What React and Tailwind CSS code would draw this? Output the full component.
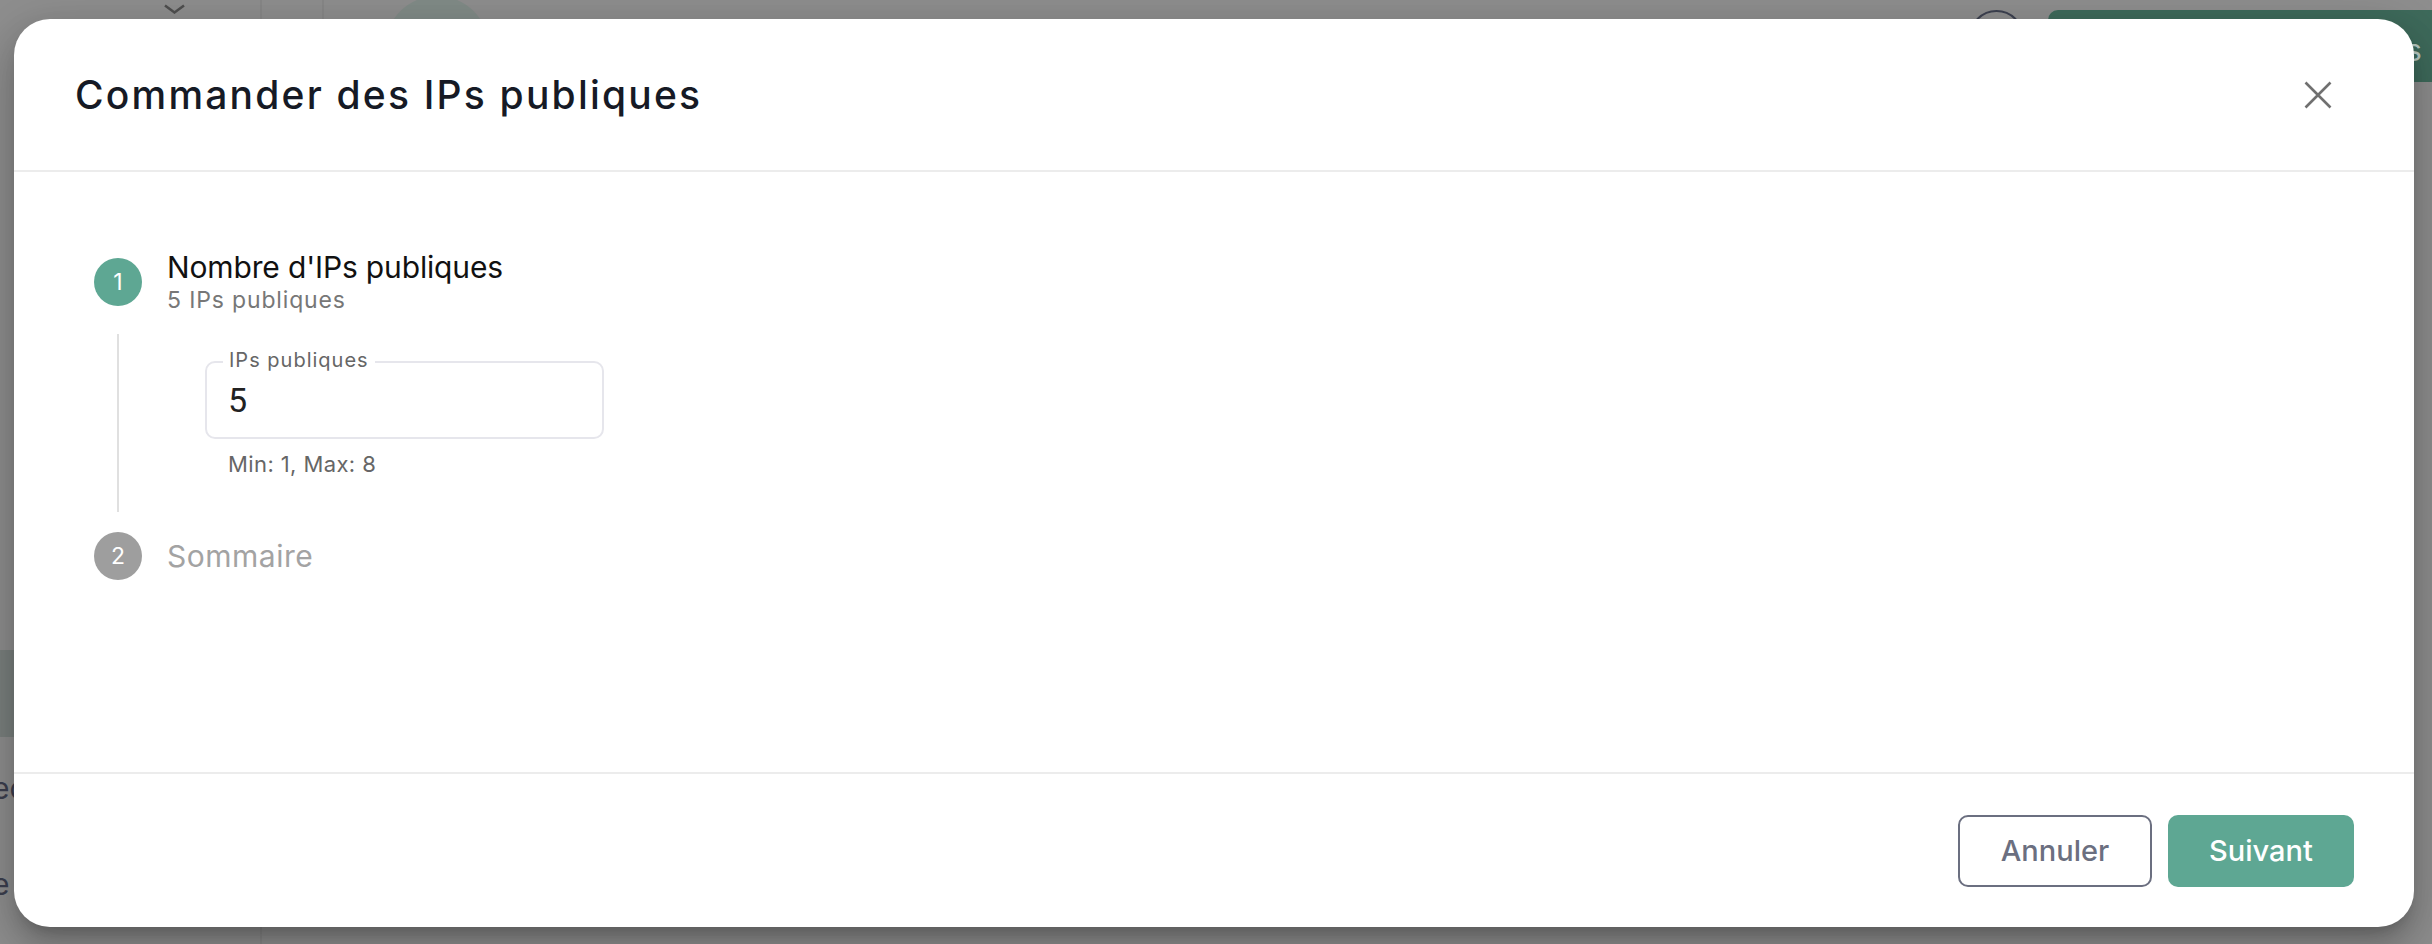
import React from "react";

export default function App() {
  return (
    <div className="relative w-[2432px] h-[944px] overflow-hidden bg-[#8e8e8e] pl-[14px] pt-[19px]" style={{ fontFamily: "Inter, 'Liberation Sans', sans-serif" }}>
      {/* dimmed page behind the dialog */}
      <svg className="absolute left-[163px] top-[4px]" width="23" height="10" viewBox="0 0 23 10">
        <path d="M2 1.5 L11.5 8.5 L21 1.5" fill="none" stroke="#4f4f4f" strokeWidth="2.5" />
      </svg>
      <div className="absolute left-[260px] top-0 h-full w-[2px] bg-[#878787]" />
      <div className="absolute left-[322px] top-0 h-[20px] w-[2px] bg-[#878787]" />
      <div className="absolute left-[385px] top-[-4px] h-[104px] w-[104px] rounded-full bg-[#818b87]" />
      <div className="absolute left-[1969px] top-[10px] h-[55px] w-[55px] rounded-full border-2 border-[#3d4150]" />
      <div className="absolute left-[2048px] top-[10px] h-[72px] w-[420px] whitespace-nowrap rounded-[10px] bg-[#3e6a5b] pl-[358px] pt-[18px] text-[30px] text-[#b9c9c2]">s pub</div>
      <div className="absolute left-0 top-[650px] h-[87px] w-[14px] bg-[#7a807e]" />
      <div className="absolute left-[-8px] top-[766px] text-[30px] text-[#3c3f4e]">ec</div>
      <div className="absolute left-[-8px] top-[862px] text-[30px] text-[#3c3f4e]">e</div>

      {/* dialog */}
      <div className="relative z-10 flex h-[908px] w-[2400px] flex-col rounded-[36px] bg-white shadow-[0_11px_15px_-7px_rgba(0,0,0,0.2),0_24px_38px_3px_rgba(0,0,0,0.14),0_9px_46px_8px_rgba(0,0,0,0.12)]">
        {/* header */}
        <div className="flex h-[153px] shrink-0 items-center justify-between border-b-2 border-[#ececec] pl-[61px] pr-[82px]">
          <h2 className="text-[39px] font-medium leading-none tracking-[2.2px] text-[#161a25]">Commander des IPs publiques</h2>
          <svg width="28" height="28" viewBox="0 0 28 28">
            <path d="M1.5 1.5 L26.5 26.5 M26.5 1.5 L1.5 26.5" stroke="#707070" strokeWidth="2.6" />
          </svg>
        </div>

        {/* body */}
        <div className="flex-1 pl-[80px] pt-[77px]">
          {/* step 1 */}
          <div className="flex items-center gap-[25px]">
            <div className="flex h-[48px] w-[48px] shrink-0 items-center justify-center rounded-full bg-[#5ea793] text-[23px] text-white">1</div>
            <div className="flex flex-col">
              <span className="text-[30px] leading-[36px] tracking-[-0.15px] text-[#111111]">Nombre d'IPs publiques</span>
              <span className="text-[23px] leading-[30px] tracking-[0.85px] text-[#777777]">5 IPs publiques</span>
            </div>
          </div>
          <div className="ml-[23px] mt-[19px] h-[178px] border-l-2 border-[#e0e0e0] pl-[86px] pt-[27px]">
            <div className="relative flex h-[78px] w-[399px] items-center rounded-[10px] border-2 border-[#e6e6ec] pl-[21px]">
              <span className="absolute left-[16px] top-[-15px] bg-white px-[6px] text-[20px] leading-[24px] tracking-[1px] text-[#666666]">IPs publiques</span>
              <span className="text-[34px] text-[#222222]" style={{ fontFamily: "Roboto, sans-serif" }}>5</span>
            </div>
            <div className="mt-[10px] pl-[23px] text-[22px] leading-[30px] tracking-[0.4px] text-[#666666]">Min: 1, Max: 8</div>
          </div>
          {/* step 2 */}
          <div className="mt-[20px] flex items-center gap-[25px]">
            <div className="flex h-[48px] w-[48px] shrink-0 items-center justify-center rounded-full bg-[#9e9e9e] text-[23px] text-white">2</div>
            <span className="text-[30px] leading-[36px] tracking-[0.5px] text-[#a3a3a3]">Sommaire</span>
          </div>
        </div>

        {/* footer */}
        <div className="flex h-[155px] shrink-0 items-center justify-end gap-[16px] border-t-2 border-[#ececec] pr-[60px]">
          <button className="flex h-[72px] w-[194px] items-center justify-center rounded-[10px] border-2 border-[#6b6f80] text-[29px] font-medium text-[#6b6f80]">Annuler</button>
          <button className="flex h-[72px] w-[186px] items-center justify-center rounded-[10px] bg-[#5ea793] text-[29px] font-medium text-white">Suivant</button>
        </div>
      </div>
    </div>
  );
}
